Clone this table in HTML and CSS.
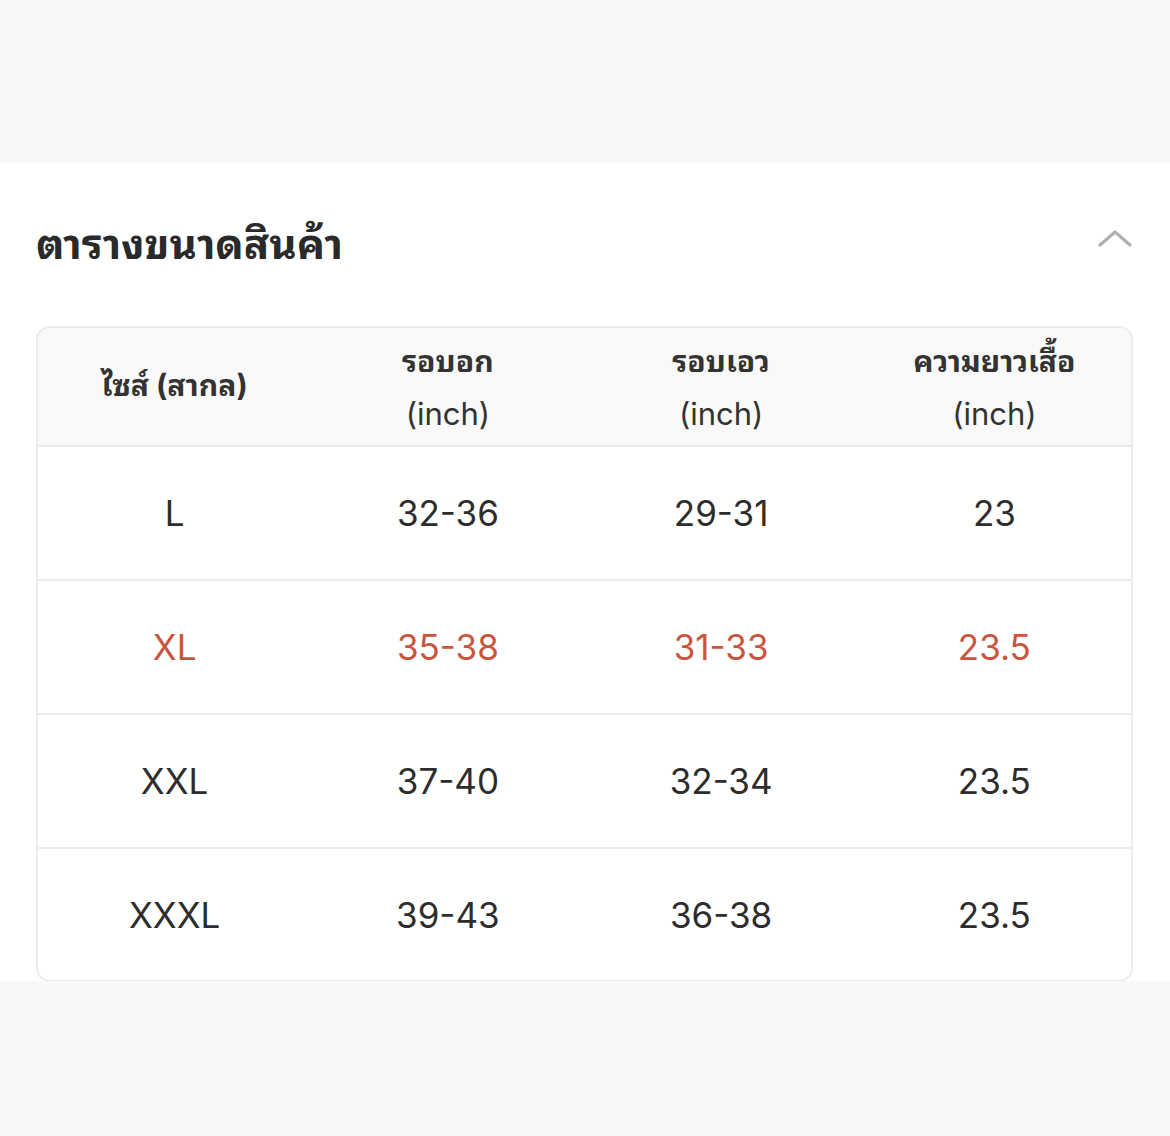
FILE: index.html
```html
<!DOCTYPE html>
<html lang="th">
<head>
<meta charset="utf-8">
<link rel="stylesheet" href="styles.css">
</head>
<body>
<div class="top-band"></div>
<section class="panel">
  <div class="panel-head">
    <h2 class="title">ตารางขนาดสินค้า</h2>
    <svg class="chev" width="34" height="20" viewBox="0 0 34 20"><path d="M2 17 L17 4 L32 17" fill="none" stroke="#b0b0b0" stroke-width="3.2" stroke-linecap="round" stroke-linejoin="round"/></svg>
  </div>
  <div class="size-table">
    <div class="row head">
      <div class="cell"><span class="th">ไซส์ (สากล)</span></div>
      <div class="cell"><span class="th">รอบอก</span><span class="unit">(inch)</span></div>
      <div class="cell"><span class="th">รอบเอว</span><span class="unit">(inch)</span></div>
      <div class="cell"><span class="th">ความยาวเสื้อ</span><span class="unit">(inch)</span></div>
    </div>
    <div class="row"><div class="cell">L</div><div class="cell">32-36</div><div class="cell">29-31</div><div class="cell">23</div></div>
    <div class="row hl"><div class="cell">XL</div><div class="cell">35-38</div><div class="cell">31-33</div><div class="cell">23.5</div></div>
    <div class="row"><div class="cell">XXL</div><div class="cell">37-40</div><div class="cell">32-34</div><div class="cell">23.5</div></div>
    <div class="row"><div class="cell">XXXL</div><div class="cell">39-43</div><div class="cell">36-38</div><div class="cell">23.5</div></div>
  </div>
</section>
<div class="bottom-band"></div>
</body>
</html>
```
FILE: styles.css
```css
html, body {
  margin: 0;
  padding: 0;
  background: #f8f8f8;
  font-family: Inter, "Noto Sans Thai Looped", Loma, Garuda, "Noto Sans Thai", "Noto Sans", sans-serif;
  color: #2b2b2b;
}
.top-band {
  height: 163px;
  background: #f8f8f8;
}
.panel {
  background: #ffffff;
  padding: 0 37px 0 36px;
  height: 818px;
  box-sizing: border-box;
}
.panel-head {
  height: 163px;
  display: flex;
  align-items: center;
  justify-content: space-between;
}
.title {
  margin: 0 0 10px 0;
  font-size: 42px;
  font-weight: 700;
  color: #2a2a2a;
}
.chev {
  margin-right: 1px;
  margin-top: -14px;
}
.size-table {
  border: 2px solid #ececec;
  border-radius: 14px;
  overflow: hidden;
  height: 656px;
  box-sizing: border-box;
}
.row {
  display: grid;
  grid-template-columns: repeat(4, 1fr);
  height: 134px;
  border-top: 2px solid #ebebeb;
  box-sizing: border-box;
}
.row.head {
  height: 117px;
  border-top: none;
  background: #f9f9f9;
}
.cell {
  display: flex;
  flex-direction: column;
  align-items: center;
  justify-content: center;
  font-size: 35px;
  color: #2d2d2d;
}
.head .cell {
  gap: 12px;
  padding-bottom: 8px;
}
.th {
  font-size: 30px;
  font-weight: 700;
  color: #333;
}
.unit {
  font-size: 31px;
  color: #333;
}
.hl .cell {
  color: #c9553f;
}
.bottom-band {
  height: 155px;
  background: #f8f8f8;
}
```
